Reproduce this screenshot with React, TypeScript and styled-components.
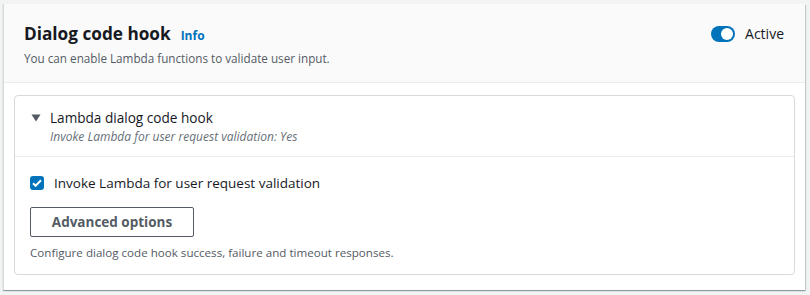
import styled, { createGlobalStyle } from "styled-components"
import { useState } from "react"

const GlobalStyle = createGlobalStyle`
    body {
        margin: 0;
        background: #f2f3f3;
        font-family: "Open Sans", "Noto Sans", sans-serif;
        color: #16191f;
    }
`

function App() {
    const [active, setActive] = useState<boolean>(true)
    const [invoke, setInvoke] = useState<boolean>(true)
    const [open, setOpen] = useState<boolean>(true)

    return (
        <>
            <GlobalStyle />
            <Page>
                <Card>
                    <Header>
                        <HeaderText>
                            <TitleRow>
                                <Title>Dialog code hook</Title>
                                <InfoLink>Info</InfoLink>
                            </TitleRow>
                            <Description>
                                You can enable Lambda functions to validate user input.
                            </Description>
                        </HeaderText>
                        <ToggleWrap onClick={() => setActive(!active)}>
                            <Toggle $on={active}>
                                <Knob $on={active} />
                            </Toggle>
                            <ToggleLabel>Active</ToggleLabel>
                        </ToggleWrap>
                    </Header>
                    <Body>
                        <Expandable>
                            <ExpandHeader onClick={() => setOpen(!open)}>
                                <Caret $open={open}>
                                    <svg width="10" height="8" viewBox="0 0 10 8">
                                        <path d="M0.5 0.5h9L5 7.5z" fill="#545b64" />
                                    </svg>
                                </Caret>
                                <ExpandText>
                                    <ExpandTitle>Lambda dialog code hook</ExpandTitle>
                                    <ExpandSub>
                                        Invoke Lambda for user request validation: Yes
                                    </ExpandSub>
                                </ExpandText>
                            </ExpandHeader>
                            {open && (
                                <ExpandContent>
                                    <CheckRow onClick={() => setInvoke(!invoke)}>
                                        <CheckBox $checked={invoke}>
                                            {invoke && (
                                                <svg width="14" height="14" viewBox="0 0 14 14">
                                                    <path
                                                        d="M3 7.2l2.6 2.6L11 4.2"
                                                        fill="none"
                                                        stroke="#fff"
                                                        strokeWidth="2"
                                                    />
                                                </svg>
                                            )}
                                        </CheckBox>
                                        <CheckLabel>
                                            Invoke Lambda for user request validation
                                        </CheckLabel>
                                    </CheckRow>
                                    <Button>Advanced options</Button>
                                    <Helper>
                                        Configure dialog code hook success, failure and timeout
                                        responses.
                                    </Helper>
                                </ExpandContent>
                            )}
                        </Expandable>
                    </Body>
                </Card>
            </Page>
        </>
    )
}

export default App

const Page = styled.div`
    padding: 4px 5px 6px 3px;
`

const Card = styled.div`
    background: #fff;
    border-left: 1px solid #d5dbdb;
    box-shadow: 0 1px 1px 0 rgba(0, 28, 36, 0.3), 1px 1px 1px 0 rgba(0, 28, 36, 0.15);
`

const Header = styled.div`
    background: #fafafa;
    border-bottom: 1px solid #eaeded;
    display: flex;
    justify-content: space-between;
    align-items: flex-start;
    padding: 19px 21px 16px 20px;
    height: 43px;
`

const HeaderText = styled.div`
    display: flex;
    flex-direction: column;
    gap: 5px;
`

const TitleRow = styled.div`
    display: flex;
    align-items: baseline;
    gap: 10px;
`

const Title = styled.h2`
    margin: 0;
    font-size: 17.2px;
    line-height: 22px;
    font-weight: 700;
    color: #16191f;
`

const InfoLink = styled.a`
    font-size: 12px;
    font-weight: 700;
    color: #0073bb;
    cursor: pointer;
`

const Description = styled.div`
    font-size: 11.7px;
    line-height: 16px;
    color: #545b64;
`

const ToggleWrap = styled.div`
    display: flex;
    align-items: center;
    gap: 10px;
    margin-top: 1px;
    cursor: pointer;
`

const Toggle = styled.div<{ $on: boolean }>`
    width: 24px;
    height: 16px;
    border-radius: 8px;
    background: ${({ $on }) => ($on ? "#0073bb" : "#aab7b8")};
    position: relative;
`

const Knob = styled.div<{ $on: boolean }>`
    position: absolute;
    top: 2px;
    left: ${({ $on }) => ($on ? "10px" : "2px")};
    width: 12px;
    height: 12px;
    border-radius: 50%;
    background: #fff;
`

const ToggleLabel = styled.span`
    font-size: 14px;
    color: #16191f;
`

const Body = styled.div`
    padding: 12px 10px 15px 10px;
`

const Expandable = styled.div`
    border: 1px solid #d5dbdb;
    border-radius: 4px;
    background: #fff;
`

const ExpandHeader = styled.div`
    display: flex;
    align-items: flex-start;
    gap: 9px;
    padding: 12px 16px 11px 16px;
    border-bottom: 1px solid #eaeded;
    cursor: pointer;
`

const Caret = styled.span<{ $open: boolean }>`
    display: flex;
    margin-top: 6px;
    transform: ${({ $open }) => ($open ? "none" : "rotate(-90deg)")};
`

const ExpandText = styled.div`
    display: flex;
    flex-direction: column;
    gap: 1px;
`

const ExpandTitle = styled.div`
    font-size: 13.6px;
    line-height: 20px;
    color: #16191f;
`

const ExpandSub = styled.div`
    font-size: 12px;
    line-height: 16px;
    font-style: italic;
    color: #687078;
`

const ExpandContent = styled.div`
    padding: 16px 15px 13px 15px;
    display: flex;
    flex-direction: column;
    align-items: flex-start;
`

const CheckRow = styled.label`
    display: flex;
    align-items: center;
    gap: 10px;
    cursor: pointer;
`

const CheckBox = styled.span<{ $checked: boolean }>`
    width: 14px;
    height: 14px;
    border-radius: 3px;
    background: ${({ $checked }) => ($checked ? "#0073bb" : "#fff")};
    border: ${({ $checked }) => ($checked ? "none" : "2px solid #879596")};
    display: flex;
    align-items: center;
    justify-content: center;
`

const CheckLabel = styled.span`
    font-size: 13.5px;
    line-height: 20px;
    color: #16191f;
`

const Button = styled.button`
    margin-top: 14px;
    width: 164px;
    height: 30px;
    background: #fff;
    border: 1px solid #545b64;
    border-radius: 2px;
    font-family: inherit;
    font-size: 13.5px;
    font-weight: 700;
    color: #545b64;
    cursor: pointer;
`

const Helper = styled.div`
    margin-top: 8px;
    font-size: 11.6px;
    line-height: 16px;
    color: #545b64;
`
